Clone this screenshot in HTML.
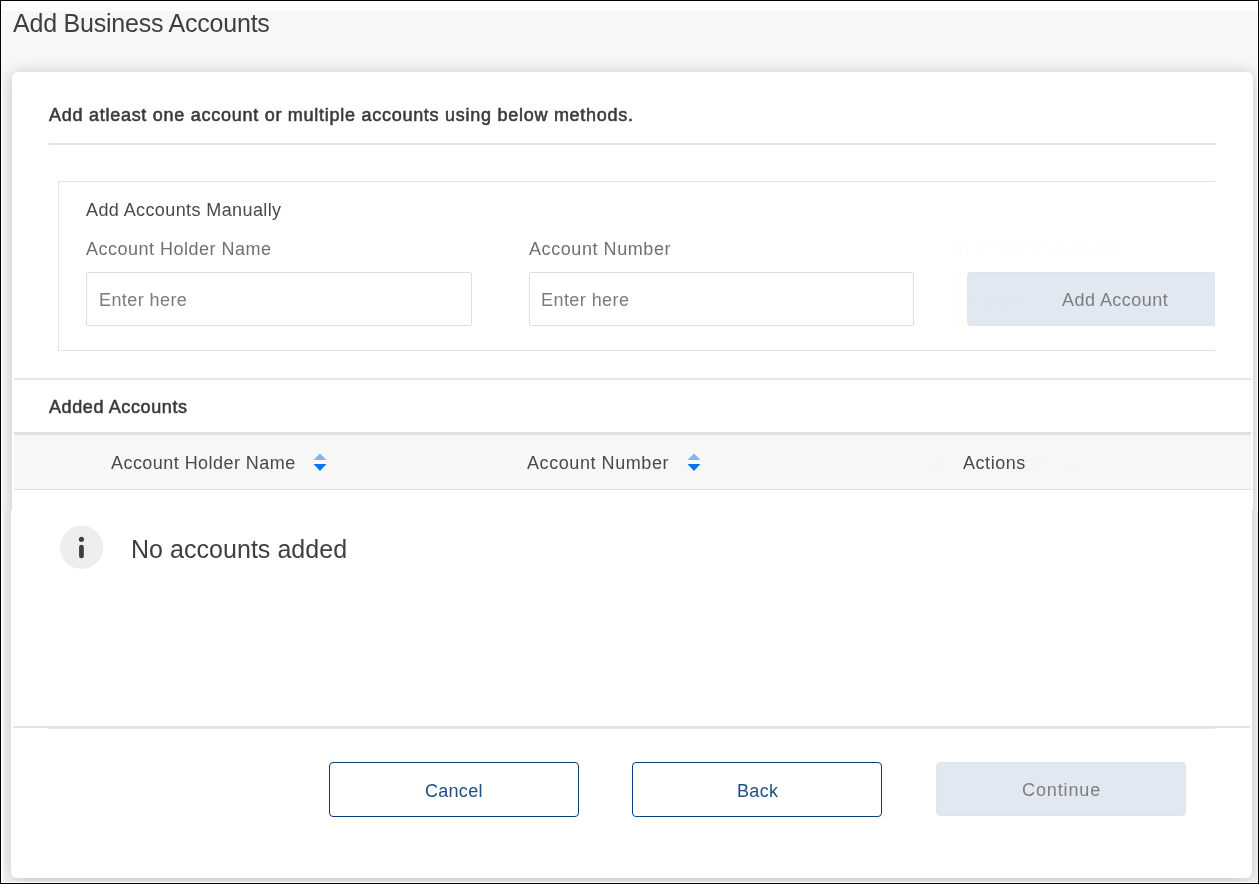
<!DOCTYPE html>
<html lang="en">
<head>
<meta charset="utf-8">
<title>Add Business Accounts</title>
<style>
*{box-sizing:border-box;margin:0;padding:0}
html,body{width:1259px;height:884px;overflow:hidden;background:#fff}
body{position:relative;font-family:"Liberation Sans",sans-serif;color:#3c3c3c}
.frame{position:absolute;left:0;top:0;width:1259px;height:884px;border:1px solid #000;z-index:50;pointer-events:none}
.bg{position:absolute;left:2px;top:11px;width:1255px;height:871px;background:#f7f7f7;overflow:hidden}
.t{position:absolute;white-space:nowrap;line-height:1;font-weight:400;transform-origin:0 0;will-change:transform;display:block}
.card{position:absolute;left:12px;top:72px;width:1241px;height:806px;background:#fff;border-radius:6px;box-shadow:0 2.5px 17px 0 rgba(0,0,0,.22)}
.hr{position:absolute;background:#e2e2e2}
.clip{position:absolute;left:49px;top:80px;width:1166px;height:290px;overflow:hidden}
.manual{position:absolute;left:9px;top:101px;width:1300px;height:170px;border:1px solid #e4e4e4}
.inp{position:absolute;height:54px;width:386px;border:1px solid #dfdfdf;border-radius:2px;background:#fff}
.btn{position:absolute;border-radius:4px;height:55px;width:250px}
.btn.o{border:1px solid #05407a;background:#fff;border-radius:4px}
.btn.d{background:#e2e8f1;border:1px solid #dfe5ee}
.gbox{position:absolute;left:953px;top:272px;width:262px;height:54px;border:1px solid #fcfcfc;border-right:0;border-radius:3px 0 0 3px}
.thead{position:absolute;left:14px;top:435px;width:1237px;height:55px;background:#f7f7f7;border-bottom:1px solid #dedede}
</style>
</head>
<body>
<div class="bg" style="height:499px"><div class="card" style="left:10px;top:61px"></div></div>
<div class="bg" style="left:3px;top:510px;height:372px"><div class="card" style="left:8px;top:-438px"></div></div>
<h1 class="t" id="title" style="left:13.0px;top:11.0px;font-size:25px;color:#3f3f3f;letter-spacing:-0.22px">Add Business Accounts</h1>

<h2 class="t" id="lead" style="left:49.0px;top:106.0px;font-size:18px;font-weight:normal;-webkit-text-stroke:0.55px #3a3a3a;color:#3a3a3a;letter-spacing:0.73px">Add atleast one account or multiple accounts using below methods.</h2>
<div class="hr" style="left:49px;top:143px;width:1167px;height:2px"></div>

<div class="clip">
  <div class="manual"></div>
</div>
<h3 class="t" id="man" style="left:86.0px;top:201.0px;font-size:18px;color:#494949;letter-spacing:0.4px">Add Accounts Manually</h3>
<label class="t" id="l1" style="left:86.0px;top:240.0px;font-size:18px;color:#707070;letter-spacing:0.49px">Account Holder Name</label>
<label class="t" id="l2" style="left:529.0px;top:240.0px;font-size:18px;color:#707070;letter-spacing:0.57px">Account Number</label>
<div class="inp" style="left:86px;top:272px"></div>
<div class="inp" style="left:529px;top:272px;width:385px"></div>
<span class="t" id="p1" style="left:99.0px;top:291.0px;font-size:18px;color:#7b7b7b;letter-spacing:0.42px">Enter here</span>
<span class="t" id="p2" style="left:541.0px;top:291.0px;font-size:18px;color:#7b7b7b;letter-spacing:0.44px">Enter here</span>
<label class="t g" id="g1" style="left:952.0px;top:240.0px;font-size:18px;color:#fdfdfd;letter-spacing:0.41px">Select Account Type</label>
<div class="gbox"></div>
<div class="btn d" style="left:967px;top:272px;width:248px;height:54px;border-radius:4px 0 0 4px"></div>
<span class="t g" id="g2" style="left:971.0px;top:291.0px;font-size:18px;color:#e0e6ef;letter-spacing:0.62px">Select</span>
<span class="t" id="addacc" style="left:1062.0px;top:291.0px;font-size:18px;color:#7e7e7e;letter-spacing:0.46px">Add Account</span>

<div class="hr" style="left:14px;top:378px;width:1237px;height:2px;background:#e6e6e6"></div>
<h2 class="t" id="added" style="left:49.0px;top:398.0px;font-size:18px;font-weight:normal;-webkit-text-stroke:0.55px #3a3a3a;color:#3a3a3a;letter-spacing:0.61px">Added Accounts</h2>
<div class="hr" style="left:14px;top:432px;width:1237px;height:3px;background:#e0e0e0"></div>
<div class="thead"></div>
<span class="t" id="h1" style="left:111.0px;top:454.0px;font-size:18px;color:#494949;letter-spacing:0.45px">Account Holder Name</span>
<span class="t" id="h2" style="left:527.0px;top:454.0px;font-size:18px;color:#494949;letter-spacing:0.57px">Account Number</span>
<span class="t g" id="g3" style="left:933.0px;top:454.0px;font-size:18px;color:#f5f5f5;letter-spacing:0.43px">Account Type</span>
<svg style="position:absolute;left:1064px;top:451px" width="16" height="22" viewBox="0 0 16 22"><path d="M8 2.5 L14.5 9 H1.5 Z" fill="#f6f6f6"/><path d="M8 20 L14.5 13 H1.5 Z" fill="#f5f5f5"/></svg>
<span class="t" id="h3" style="left:962.5px;top:454.0px;font-size:18px;color:#494949;letter-spacing:0.55px">Actions</span>
<svg style="position:absolute;left:312px;top:451px" width="16" height="22" viewBox="0 0 16 22"><path d="M8 2.5 L14.5 9 H1.5 Z" fill="#7db6f3" stroke="#fdfbfb" stroke-width="1" paint-order="stroke"/><path d="M8 20 L14.5 13 H1.5 Z" fill="#0a74ec" stroke="#fdfbfb" stroke-width="1" paint-order="stroke"/></svg>
<svg style="position:absolute;left:686px;top:451px" width="16" height="22" viewBox="0 0 16 22"><path d="M8 2.5 L14.5 9 H1.5 Z" fill="#7db6f3" stroke="#fdfbfb" stroke-width="1" paint-order="stroke"/><path d="M8 20 L14.5 13 H1.5 Z" fill="#0a74ec" stroke="#fdfbfb" stroke-width="1" paint-order="stroke"/></svg>

<svg style="position:absolute;left:55px;top:520px" width="55" height="55" viewBox="55 520 55 55"><circle cx="81.6" cy="547.3" r="21.7" fill="#eeeeee"/><circle cx="81.45" cy="539.3" r="2.6" fill="#404040"/><rect x="79.05" y="544.7" width="4.8" height="13.6" rx="2.4" fill="#404040"/></svg>
<p class="t" id="none" style="left:131.4px;top:537.0px;font-size:25px;color:#3f3f3f;letter-spacing:0.04px">No accounts added</p>

<div class="hr" style="left:13px;top:726px;width:1237px;height:2px;background:#e2e2e2"></div>
<div class="hr" style="left:48px;top:728px;width:1167px;height:1px;background:#e6e6e6"></div>

<div class="btn o" style="left:329px;top:762px"></div>
<div class="btn o" style="left:632px;top:762px"></div>
<div class="btn d" style="left:936px;top:762px;height:54px"></div>
<span class="t" id="cancel" style="left:425.0px;top:782.0px;font-size:18px;color:#1c4f82;letter-spacing:0.28px">Cancel</span>
<span class="t" id="back" style="left:737.0px;top:782.0px;font-size:18px;color:#1c4f82;letter-spacing:0.35px">Back</span>
<span class="t" id="cont" style="left:1022.0px;top:781.0px;font-size:18px;color:#7e7e7e;letter-spacing:0.89px">Continue</span>

<div class="frame"></div>
</body>
</html>
